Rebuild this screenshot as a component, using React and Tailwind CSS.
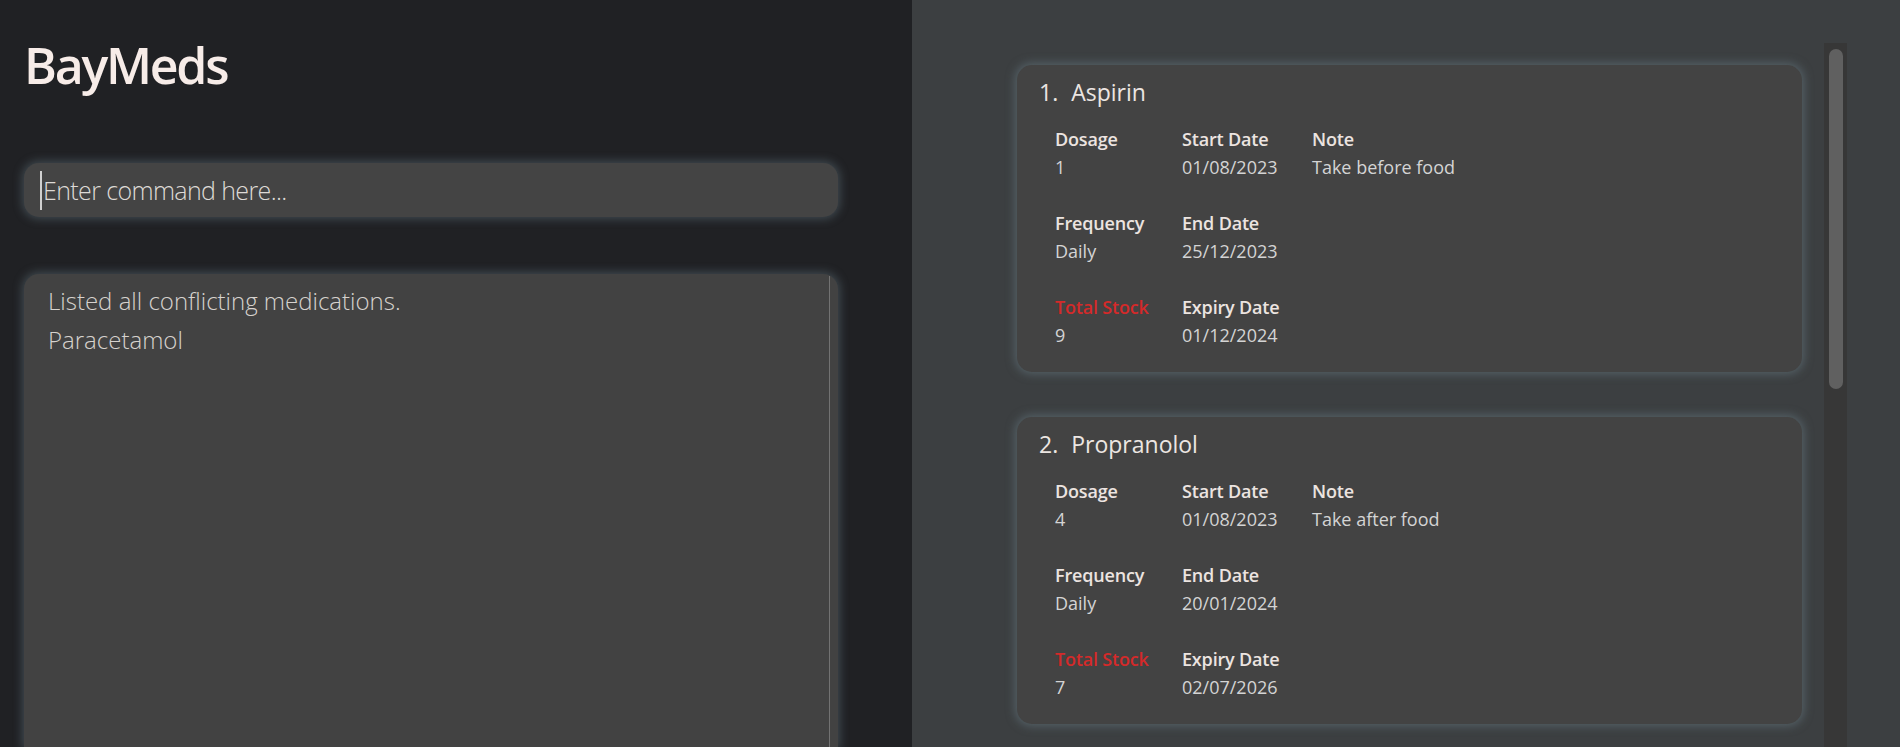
import React from "react";

const meds = [
  {
    n: 1,
    name: "Aspirin",
    dosage: "1",
    start: "01/08/2023",
    note: "Take before food",
    freq: "Daily",
    end: "25/12/2023",
    stock: "9",
    expiry: "01/12/2024",
  },
  {
    n: 2,
    name: "Propranolol",
    dosage: "4",
    start: "01/08/2023",
    note: "Take after food",
    freq: "Daily",
    end: "20/01/2024",
    stock: "7",
    expiry: "02/07/2026",
  },
];

function Cell({ label, value, red }) {
  return (
    <div className="flex flex-col">
      <div
        className={
          "text-[18px] leading-[28px] font-semibold whitespace-nowrap tracking-[-0.01em] " +
          (red ? "text-[#d42a2a]" : "text-[#ece4e0]")
        }
      >
        {label}
      </div>
      <div className="text-[18px] leading-[28px] font-normal text-[#d4d4d4] whitespace-nowrap">
        {value}
      </div>
    </div>
  );
}

function Card({ m }) {
  return (
    <div className="rounded-[15px] bg-[#434343] shadow-[0_0_10px_2px_rgba(105,125,135,0.55)] pt-[13px] pb-[23px] px-[22px] h-[307px]">
      <div className="flex items-baseline text-[23px] leading-[28px] text-[#ece6e2]">
        <span>{m.n}.</span>
        <span className="ml-[13px]">{m.name}</span>
      </div>
      <div className="ml-4 mt-[19px] grid grid-cols-[127px_130px_auto] gap-y-[28px]">
        <Cell label="Dosage" value={m.dosage} />
        <Cell label="Start Date" value={m.start} />
        <Cell label="Note" value={m.note} />
        <Cell label="Frequency" value={m.freq} />
        <Cell label="End Date" value={m.end} />
        <div />
        <Cell label="Total Stock" value={m.stock} red />
        <Cell label="Expiry Date" value={m.expiry} />
        <div />
      </div>
    </div>
  );
}

export default function App() {
  return (
    <div
      className="flex w-[1900px] h-[747px] overflow-hidden"
      style={{ fontFamily: '"Open Sans", "Noto Sans", sans-serif' }}
    >
      {/* Left panel */}
      <div className="w-[912px] shrink-0 bg-[#202124] pl-6 flex flex-col">
        <div className="mt-[39px] text-[50px] leading-[52px] font-semibold text-[#f7ece8] tracking-[-0.045em]">
          BayMeds
        </div>
        <div className="mt-[72px] w-[814px] h-[54px] rounded-[15px] bg-[#444444] shadow-[0_0_10px_2px_rgba(105,125,135,0.45)] flex items-center pl-[16px]">
          <span className="w-[2px] h-[39px] bg-[#d0d0d0]" />
          <span className="ml-px text-[25px] font-light text-[#dedad6] leading-none tracking-[-0.025em]">
            Enter command here...
          </span>
        </div>
        <div className="mt-[57px] w-[814px] flex-1 rounded-t-[15px] bg-[#424242] shadow-[0_0_10px_2px_rgba(105,125,135,0.45)] flex">
          <div className="flex-1 pl-6 pt-[7px] text-[24px] leading-[39px] font-light text-[#d6d2ce]">
            <div>Listed all conflicting medications.</div>
            <div>Paracetamol</div>
          </div>
          <div className="w-[9px] mt-[2px] border-l border-[#727272]" />
        </div>
      </div>

      {/* Right panel */}
      <div className="flex-1 bg-[#3c3f41] flex pl-[105px] pr-[53px] pt-[43px]">
        <div className="flex-1 pt-[22px] pr-[22px] flex flex-col gap-[45px]">
          {meds.map((m) => (
            <Card key={m.n} m={m} />
          ))}
        </div>
        <div className="w-[23px] bg-[#373737] flex justify-center pt-[6px]">
          <div className="w-[14px] h-[340px] rounded-[7px] bg-[#606060]" />
        </div>
      </div>
    </div>
  );
}
